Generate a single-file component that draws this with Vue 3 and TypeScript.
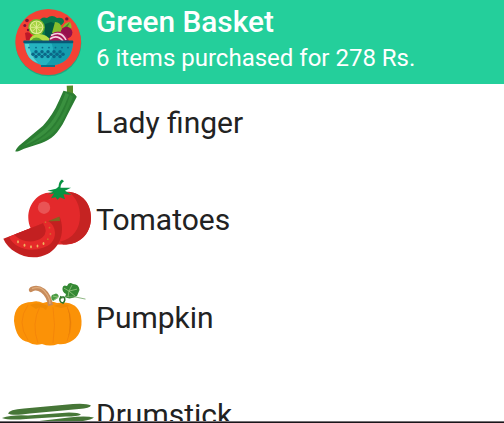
<script setup lang="ts">
type ItemKind = 'okra' | 'tomato' | 'pumpkin' | 'drumstick'
interface BasketItem { kind: ItemKind; name: string }

const items: BasketItem[] = [
  { kind: 'okra', name: 'Lady finger' },
  { kind: 'tomato', name: 'Tomatoes' },
  { kind: 'pumpkin', name: 'Pumpkin' },
  { kind: 'drumstick', name: 'Drumstick' },
]
const seeds: [number, number][] = [[18, 70], [24.5, 73.5], [31, 75], [37.5, 74.3], [43.5, 71.8]]
const spots: [number, number][] = [[47.8, 67.5], [50.4, 62.2], [49.5, 56], [45.5, 50.5]]
const dots: number[] = [29, 36, 42.5, 49, 55.5, 62, 68]
const weave: [number, number][] = [
  [33, 54.2], [36, 51.8], [36, 56.6], [39, 54.2], [42, 51.8], [42, 56.6], [45, 54.2],
  [48, 51.8], [48, 56.6], [51, 54.2], [54, 51.8], [54, 56.6], [57, 54.2], [60, 51.8], [60, 56.6], [63, 54.2],
]
</script>

<template>
  <main class="screen">
    <header class="bar">
      <svg class="logo" viewBox="0 0 96 84" aria-hidden="true">
        <ellipse cx="48.5" cy="43.2" rx="32.8" ry="33" fill="#178e6c" opacity=".55" />
        <circle cx="48.2" cy="42" r="32.9" fill="#f34235" />
        <path d="M38 39 39 22Q41 16 47 18Q52 14 57 18Q64 17 64 22Q61 27 56 27L54 39Z" fill="#08794b" />
        <path d="M45 24 51 22 56 24 53 40H45Z" fill="#005b42" />
        <path d="M25 33Q28 31 31 34L34 40H26Z" fill="#bd1728" />
        <circle cx="36.5" cy="27.3" r="8.3" fill="#74b82b" />
        <circle cx="36.5" cy="27.3" r="6.9" fill="#e0ed91" />
        <circle cx="36.5" cy="27.3" r="5.7" fill="#a6d344" />
        <path d="M31 27.3H42M36.5 22V33M32.6 23.4 40.4 31.2M40.4 23.4 32.6 31.2" stroke="#e0ed91" stroke-width=".9" />
        <path d="M29.5 40.5Q31 34 39 34Q47 34 51 41H30Z" fill="#b5de45" />
        <path d="M31 40.5Q34 36 39 38L43 41H31Z" fill="#5ba62c" />
        <path d="M52 33 55 22Q61 22 62 29Q64 22 70 22Q73 26 70 32L61 35Z" fill="#85bd2c" />
        <path d="M62 29 70 22 65 32Z" fill="#418f2c" />
        <circle cx="66.5" cy="32.6" r="5.9" fill="#950f4b" />
        <path d="M49 41Q50 32 58 31.5Q66 32 69 41Z" fill="#a71857" />
        <path d="M51 35.5Q61 30 66 40M50 39Q57 34 63 41" fill="none" stroke="#f5d5e3" stroke-width="1.6" />
        <g fill="#7d1438"><circle cx="27" cy="20.5" r="1.8" /><circle cx="24.8" cy="25.5" r="1.5" /><circle cx="28" cy="30" r="1.2" /><circle cx="66.8" cy="18.9" r="1.7" /></g>
        <path d="M24 41H73Q73 61 55 65V67H41V65Q25 60 24 41Z" fill="#25b3c0" />
        <path d="M51 42H73Q72 62 55 65H46Q57 55 51 42Z" fill="#149cad" />
        <path d="M25 44Q26 60 38 63Q30 56 29 44Z" fill="#5bd4d3" />
        <rect x="23.3" y="40.4" width="50" height="2.8" rx="1" fill="#075a77" />
        <g fill="#0b6787">
          <circle v-for="x in dots" :key="x" :cx="x" cy="47.6" r=".9" />
          <circle v-for="([x, y], i) in weave" :key="`weave-${i}`" :cx="x" :cy="y" r="1.75" />
        </g>
        <path d="M41 65H55V67H41Z" fill="#08728a" />
      </svg>
      <div class="heading">
        <h1>Green Basket</h1>
        <p>6 items purchased for 278 Rs.</p>
      </div>
    </header>

    <ul class="list">
      <li v-for="item in items" :key="item.kind" class="row">
        <svg v-if="item.kind === 'okra'" class="picture" viewBox="0 2.3 96 97.6" aria-hidden="true">
          <path d="M66.7 14 73 13.8 73 21 76 24.5 64 22.5 67 20Z" fill="#578c2b" />
          <path d="M63.5 19Q69 20 74 22L76.8 25Q70 38 65 48C58 62 51 68 41 71.5L24 77Q17 80.5 15.4 79.8Q15 78.5 19 74L43 54Q53 43 59 29Z" fill="#2b7d32" />
          <path d="M65.5 21 69 23Q60 46 51 56Q42 66 24 74L44 58Q57 47 65.5 21Z" fill="#3a913f" />
          <path d="M70 23 73 25Q64 48 57 57Q49 67 29 74Q47 64 55 54Q65 41 70 23Z" fill="#348a39" />
        </svg>

        <svg v-else-if="item.kind === 'tomato'" class="picture" viewBox="0 -.7 96 97.6" aria-hidden="true">
          <path d="M28.3 46C28 31 40 19 53 21L66 20C80 20 91 30 91 46C91 61 80 72.7 66 72.7C42 74 28.5 62 28.3 46Z" fill="#e3292b" />
          <path d="M69 20C82 22 91 31 91 46C91 63 79 73 63 72.8L60 70C73 67 80 57 80 44C80 34 76 26 69 20Z" fill="#c52322" />
          <circle cx="44" cy="36" r="6.2" fill="#e95455" />
          <path d="M47.5 19 56 17 58.5 15Q59 9 62 7.8L64 9.5Q60.5 12 60.5 16L71 16 65 19 71.5 23 63.5 22.5 65 27.5 60 25.5 57.5 28 55.5 25.5 51 26.5 54 21.8 48 22.5 53 20Z" fill="#079342" />
          <path d="M3.3 67 59.8 45.4C65 59 61 75 48 82C31 91 10 82 3.3 67Z" fill="#c32020" />
          <path d="M9 65 48.5 49.5Q55 54 55 61C55 69 50 74 43 76C29 81 14 76 9 65Z" fill="#e52a2a" />
          <path d="M14.5 62.7 43 51.5Q49 60 42 66C32 73 19 69 14.5 62.7Z" fill="#c32021" />
          <path d="M48 49.5 59.5 44.8 60 49.2 50 49.5Z" fill="#806722" />
          <ellipse v-for="([x, y], i) in seeds" :key="`seed-${i}`" :cx="x" :cy="y" rx=".9" ry="1.5" fill="#efb55f" />
          <circle v-for="([x, y], i) in spots" :key="`spot-${i}`" :cx="x" :cy="y" r=".9" fill="#d36930" />
        </svg>

        <svg v-else-if="item.kind === 'pumpkin'" class="picture" viewBox="0 -3.1 96 97.6" aria-hidden="true">
          <path d="M14 49C14 36 21 30 32 30Q37 28 43 31Q51 28 57 31Q77 28 81 44Q84 63 70 70Q64 73 58 72Q50 75 42 72Q34 74 28 70Q16 68 14 49Z" fill="#fb9207" />
          <path d="M28 33Q16 50 28 68M40 34Q31 52 38 71M53 35Q56 53 53 71M67 34Q75 51 67 69" fill="none" stroke="#f38309" stroke-width=".8" />
          <path d="M67 34Q74 49 68 66Q72 49 67 34Z" fill="#e27a08" />
          <path d="M30 33Q39 29 48 34L46 38Q41 33 36 37ZM54 34Q64 30 70 34L61 36Z" fill="#ef8a05" />
          <path d="M29 19Q28 16 32 14.5Q38 12 45 17Q51 22 53 33L48 34Q47 25 41 20.5Q36 17 32.5 19.5Q30 21 29 19Z" fill="#c78b5b" />
          <path d="M32 16.5Q41 13 46 21Q50 26 50 32" fill="none" stroke="#dfac7b" stroke-width="1.2" />
          <path d="M62.5 16Q63 12 67 14Q69 9 73 12Q79 12 79.5 18L77 24Q70 28 65 25L66 22Q62 20 62.5 16Z" fill="#348934" />
          <path d="M52 23 56 21.5Q60 23 58 26L53 29Q50 26 52 23Z" fill="#4a9c44" />
          <path d="M59 27Q67 23 76 25L85.5 27" fill="none" stroke="#72a665" stroke-width=".8" />
          <path d="M60 29Q59 24 64 25Q66 28 63 31Q58 30 61 24" fill="none" stroke="#2d752c" stroke-width="1.5" />
          <path d="M64 16 69 19 72 13M69 19 77 17M69 19 68 25M69 19 75 24M53 24 58 25 54 28" fill="none" stroke="#a8d08e" stroke-width=".7" />
        </svg>

        <svg v-else class="picture" viewBox="0 -.5 96 97.6" aria-hidden="true">
          <path d="M8 47Q9 43 24 42L73 37.5Q86 36.5 91 39Q90 41.5 79 42.5L30 47Q12 49.5 8 47Z" fill="#467637" />
          <path d="M2 51.5Q12 48 28 49L69 46Q79 46 81 48Q78 50 66 50L26 52.5Q9 54 2 51.5Z" fill="#477838" />
          <path d="M27 56 69 51Q85 49 94 51Q91 54 78 55L31 59Z" fill="#467537" />
        </svg>
        <span>{{ item.name }}</span>
      </li>
    </ul>
    <div class="edge"></div>
  </main>
</template>

<style>
body { margin: 0; background: #fff; }
</style>

<style scoped>
.screen { width: 100%; height: 423px; overflow: hidden; display: flex; flex-direction: column; font-family: Roboto, "Liberation Sans", sans-serif; }
.bar { flex: none; height: 84px; display: flex; background: #24cf9b; color: #fff; }
.logo { flex: none; width: 96px; height: 84px; }
.heading { padding-top: 4px; }
h1 { margin: 0; font-size: 29.8px; line-height: 36px; font-weight: 500; }
p { margin: 0; font-size: 24px; line-height: 36px; white-space: nowrap; }
.list { height: 337px; overflow: hidden; margin: 0; padding: 0; list-style: none; }
.row { display: flex; align-items: center; height: 97.6px; color: #222; font-size: 30px; line-height: 36px; }
.row:first-child { margin-top: -10.3px; }
.picture { flex: none; width: 96px; height: 97.6px; }
.edge { flex: none; height: 2px; box-sizing: border-box; border-top: 1px solid #747174; background: #191519; }
</style>
